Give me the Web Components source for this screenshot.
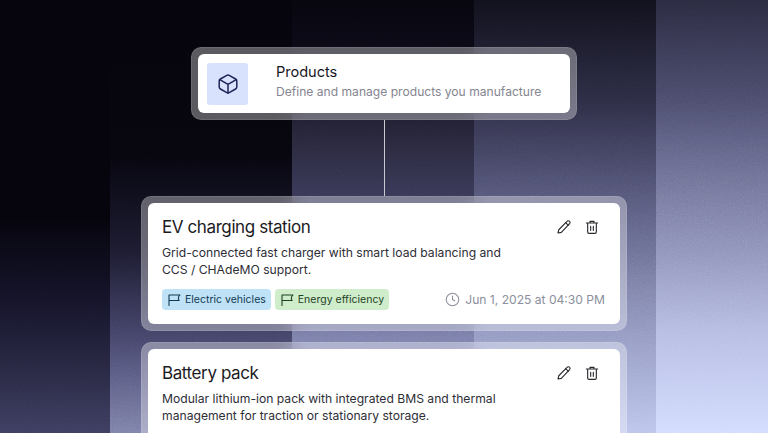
<!DOCTYPE html>
<html>
<head>
<meta charset="utf-8">
<style>
  html, body { margin: 0; height: 100%; }
  body { width: 768px; height: 433px; overflow: hidden; font-family: Inter, "Liberation Sans", sans-serif; }
</style>
</head>
<body>
<flow-scene>
  <node-head slot="head" title="Products" sub="Define and manage products you manufacture"></node-head>
  <product-card title="EV charging station" when="Jun 1, 2025 at 04:30 PM">
    Grid-connected fast charger with smart load balancing and<br>CCS / CHAdeMO support.
    <tag-pill slot="tags" kind="blue">Electric vehicles</tag-pill>
    <tag-pill slot="tags" kind="green">Energy efficiency</tag-pill>
  </product-card>
  <product-card title="Battery pack">
    Modular lithium-ion pack with integrated BMS and thermal<br>management for traction or stationary storage.
  </product-card>
</flow-scene>

<script>
const html = String.raw;

const sceneTemplate = document.createElement("template");
sceneTemplate.innerHTML = html`
  <style>
    :host {
      display: block;
      position: relative;
      width: 768px;
      height: 433px;
      overflow: hidden;
      background: #07060f;
    }
    .bars {
      position: absolute;
      inset: 0;
      display: grid;
      grid-template-columns: 110px 182px 182px 182px 112px;
    }
    .bars div:nth-child(1) { background: linear-gradient(180deg, #05040c 0%, #05040c 50%, #15142a 70%, #2a2a45 87%, #3d3d60 100%); }
    .bars div:nth-child(2) { background: linear-gradient(180deg, #05040c 0%, #07060f 36%, #1c1b30 58%, #45456a 78%, #7d80aa 100%); }
    .bars div:nth-child(3) { background: linear-gradient(180deg, #07060f 0%, #0b0a16 13%, #2c2b41 35%, #44446a 55%, #7a7eaa 78%, #a3a9d8 100%); }
    .bars div:nth-child(4) { background: linear-gradient(180deg, #11101c 0%, #2c2c44 23%, #4a4b6b 39%, #6d7096 58%, #9197c0 76%, #bcc5ec 100%); }
    .bars div:nth-child(5) { background: linear-gradient(180deg, #2a2a40 0%, #4b4c6c 23%, #6b6d92 39%, #8f93ba 58%, #b5bbe2 76%, #d2dcff 100%); }
    .grain {
      position: absolute;
      inset: 0;
      width: 768px;
      height: 433px;
      opacity: 0.25;
      mix-blend-mode: overlay;
    }
    .flow {
      position: relative;
      display: flex;
      flex-direction: column;
      align-items: center;
      padding-top: 47px;
    }
    .line { width: 1px; height: 76px; background: #c9c9d4; margin-left: 1px; }
    .cards { display: flex; flex-direction: column; gap: 11px; }
  </style>
  <div class="bars"><div></div><div></div><div></div><div></div><div></div></div>
  <svg class="grain">
    <filter id="noise"><feTurbulence type="fractalNoise" baseFrequency="0.9" numOctaves="2"/><feColorMatrix type="saturate" values="0"/></filter>
    <rect width="768" height="433" filter="url(#noise)"/>
  </svg>
  <div class="flow">
    <slot name="head"></slot>
    <div class="line"></div>
    <div class="cards"><slot></slot></div>
  </div>
`;

class FlowScene extends HTMLElement {
  constructor() {
    super();
    this.attachShadow({ mode: "open" }).appendChild(sceneTemplate.content.cloneNode(true));
  }
}

const headTemplate = document.createElement("template");
headTemplate.innerHTML = html`
  <style>
    :host {
      display: block;
      width: 386px;
      box-sizing: border-box;
      padding: 7px;
      border-radius: 10px;
      background: rgba(255, 255, 255, 0.34);
      backdrop-filter: blur(10px);
      box-shadow: inset 0 0 0 1px rgba(255, 255, 255, 0.1);
    }
    .box {
      display: flex;
      align-items: center;
      height: 59px;
      box-sizing: border-box;
      padding: 0 8px 0 9px;
      background: #fff;
      border-radius: 6px;
    }
    .icon {
      width: 41px;
      height: 42px;
      flex: none;
      display: flex;
      align-items: center;
      justify-content: center;
      background: #d9e2fd;
      border-radius: 3px;
      margin-right: 28px;
    }
    .text { margin-top: -2px; }
    .title { font-size: 14.6px; line-height: 19px; color: #16161d; letter-spacing: -0.05px; }
    .sub { font-size: 12.1px; line-height: 20px; color: #85858f; }
  </style>
  <div class="box">
    <div class="icon">
      <svg width="24" height="24" viewBox="0 0 24 24" fill="none" stroke="#1e2358" stroke-width="1.5" stroke-linejoin="round" stroke-linecap="round">
        <path d="M10.8 3.4a2.4 2.4 0 0 1 2.4 0l6.4 3.6A2.4 2.4 0 0 1 20.8 9v6a2.4 2.4 0 0 1-1.2 2l-6.4 3.6a2.4 2.4 0 0 1-2.4 0L4.400 17a2.4 2.4 0 0 1-1.200-2V9a2.4 2.4 0 0 1 1.200-2z"/>
        <path d="M3.800 7.700 12 12.300l8.200-4.600M12 12.300v8.900"/>
      </svg>
    </div>
    <div class="text">
      <div class="title" id="title"></div>
      <div class="sub" id="sub"></div>
    </div>
  </div>
`;

class NodeHead extends HTMLElement {
  constructor() {
    super();
    this.attachShadow({ mode: "open" }).appendChild(headTemplate.content.cloneNode(true));
  }
  connectedCallback() {
    this.shadowRoot.getElementById("title").textContent = this.getAttribute("title");
    this.shadowRoot.getElementById("sub").textContent = this.getAttribute("sub");
  }
}

const cardTemplate = document.createElement("template");
cardTemplate.innerHTML = html`
  <style>
    :host {
      display: block;
      width: 486px;
      box-sizing: border-box;
      padding: 7px;
      border-radius: 10px;
      background: rgba(255, 255, 255, 0.34);
      backdrop-filter: blur(10px);
      box-shadow: inset 0 0 0 1px rgba(255, 255, 255, 0.1);
    }
    .box {
      background: #fff;
      border-radius: 6px;
      height: 121px;
      box-sizing: border-box;
      padding: 14px 15px 0 14px;
    }
    .top { display: flex; align-items: center; justify-content: space-between; height: 20px; }
    .title { font-size: 17px; line-height: 20px; color: #1b1b22; letter-spacing: -0.4px; }
    .tools { display: flex; gap: 12px; padding-right: 5px; }
    .desc { margin-top: 7px; font-size: 12.15px; line-height: 17.3px; color: #2e2e36; }
    .foot { display: flex; align-items: center; justify-content: space-between; margin-top: 10px; }
    .tags { display: flex; gap: 4px; }
    .when { display: flex; align-items: center; gap: 5px; font-size: 12.1px; color: #8b8f9c; }
  </style>
  <div class="box">
    <div class="top">
      <div class="title" id="title"></div>
      <div class="tools">
        <svg width="16" height="16" viewBox="0 0 24 24" fill="none" stroke="#2a2a30" stroke-width="1.7" stroke-linejoin="round" stroke-linecap="round">
          <path d="M16.500 3.500a2.600 2.600 0 0 1 3.900 3.500L8 20l-5 1 1.200-4.900z"/>
          <path d="M14.500 5.500l4 4"/>
        </svg>
        <svg width="16" height="16" viewBox="0 0 24 24" fill="none" stroke="#2a2a30" stroke-width="1.7" stroke-linejoin="round" stroke-linecap="round">
          <path d="M3.500 6h17M9 6V3.500h6V6M5.500 6v13.500a2 2 0 0 0 2 2h9a2 2 0 0 0 2-2V6"/>
          <path d="M10 11v6M14 11v6"/>
        </svg>
      </div>
    </div>
    <div class="desc"><slot></slot></div>
    <div class="foot" id="foot">
      <div class="tags"><slot name="tags"></slot></div>
      <div class="when" id="when">
        <svg width="15" height="15" viewBox="0 0 24 24" fill="none" stroke="#8b8f9c" stroke-width="1.700" stroke-linecap="round" stroke-linejoin="round">
          <circle cx="12" cy="12" r="10"/>
          <path d="M12 6.500V12l3.500 2"/>
        </svg>
        <span id="whenText"></span>
      </div>
    </div>
  </div>
`;

class ProductCard extends HTMLElement {
  constructor() {
    super();
    this.attachShadow({ mode: "open" }).appendChild(cardTemplate.content.cloneNode(true));
  }
  connectedCallback() {
    const root = this.shadowRoot;
    root.getElementById("title").textContent = this.getAttribute("title");
    if (this.hasAttribute("when")) {
      root.getElementById("whenText").textContent = this.getAttribute("when");
    } else {
      root.getElementById("foot").style.display = "none";
    }
  }
}

const pillTemplate = document.createElement("template");
pillTemplate.innerHTML = html`
  <style>
    :host {
      display: inline-flex;
      align-items: center;
      gap: 4px;
      height: 21px;
      padding: 0 5px 0 6px;
      border-radius: 4px;
      font-size: 10.5px;
      white-space: nowrap;
    }
    :host([kind="blue"]) { background: #bfe2f6; color: #123a55; }
    :host([kind="green"]) { background: #cfeccb; color: #1d4223; }
  </style>
  <svg width="13" height="13" viewBox="0 0 13 13" fill="none" stroke="currentColor" stroke-width="1.100" stroke-linejoin="round" stroke-linecap="round">
    <path d="M1 12.500V2h11l-1.300 1.500-.4 2.300.8 1.700H1"/>
  </svg>
  <slot></slot>
`;

class TagPill extends HTMLElement {
  constructor() {
    super();
    this.attachShadow({ mode: "open" }).appendChild(pillTemplate.content.cloneNode(true));
  }
}

customElements.define("flow-scene", FlowScene);
customElements.define("node-head", NodeHead);
customElements.define("product-card", ProductCard);
customElements.define("tag-pill", TagPill);
</script>
</body>
</html>
